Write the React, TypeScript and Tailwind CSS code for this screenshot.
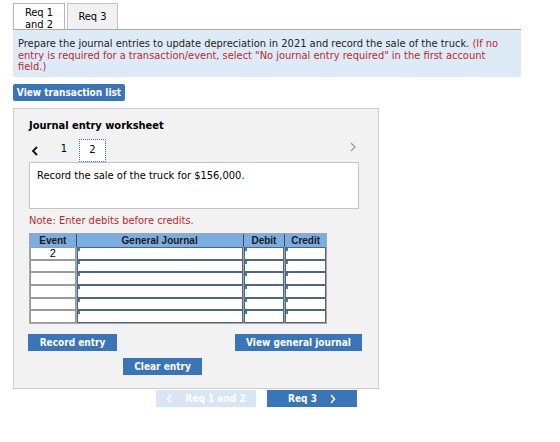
import React from "react";

const verdana = { fontFamily: '"DejaVu Sans Condensed", "DejaVu Sans", Verdana, sans-serif' };
const arial = { fontFamily: '"Liberation Sans", Arial, sans-serif' };

function Row({ event }: { event?: string }) {
  return (
    <div className="flex h-[12.7px] gap-[1px]">
      <div className="w-[46px] h-full bg-white border border-[#9a9a9a] flex items-center justify-center text-[11px] text-black" style={arial}>
        {event}
      </div>
      <div className="w-[167px] h-full border-[1.5px] border-[#4f6785] relative bg-white">
        <span className="absolute left-0 top-0 w-[2px] h-[3px] bg-[#3b7bd0]" />
      </div>
      <div className="w-[41px] h-full border-[1.5px] border-[#4f6785] relative bg-white">
        <span className="absolute left-0 top-0 w-[2px] h-[3px] bg-[#3b7bd0]" />
      </div>
      <div className="w-[41px] h-full border-[1.5px] border-[#4f6785] relative bg-white">
        <span className="absolute left-0 top-0 w-[2px] h-[3px] bg-[#3b7bd0]" />
      </div>
    </div>
  );
}

export default function App() {
  return (
    <div className="w-[560px] h-[442px] bg-white relative" style={verdana}>
      <div className="pl-[13px] pt-[3px]">
        {/* tabs */}
        <div className="flex gap-[2px] items-end h-[26px]">
          <div className="w-[52px] h-[26px] pt-[4px] bg-white border border-b-0 border-[#b5b5b5] flex flex-col items-center justify-center text-[11px] leading-[12px] text-black">
            <span>Req 1</span>
            <span>and 2</span>
          </div>
          <div className="w-[51px] h-[26px] pt-[2px] bg-[#f1f1f1] border border-b-0 border-[#c5c5c5] flex items-center justify-center text-[11px] text-black">
            Req 3
          </div>
        </div>
        {/* instructions */}
        <div className="w-[508px] h-[48px] bg-[#ddebf7] border-t border-[#a9a9a9] px-[5px] pt-[8px] text-[11px] leading-[11.5px] text-[#222]">
          Prepare the journal entries to update depreciation in 2021 and record the sale of the truck.{" "}
          <span className="text-[#c0272d]">
            (If no entry is required for a transaction/event, select "No journal entry required" in the first account field.)
          </span>
        </div>
        <div className="mt-[7px] w-[112px] h-[17px] bg-[#3b75b9] rounded-[2px] text-white font-bold text-[10px] flex items-center justify-center whitespace-nowrap">
          View transaction list
        </div>
        {/* worksheet */}
        <div className="mt-[7px] w-[366px] h-[281px] bg-[#f2f2f2] border border-[#cfcfcf] px-[15px] pt-[10px] relative">
          <div className="text-[11px] font-bold text-black leading-[14px]">Journal entry worksheet</div>
          <div className="mt-[6px] flex items-end h-[23px] relative">
            <span className="w-[20px] pl-[2px] pb-[6px] text-black">
              <svg width="8" height="10" viewBox="0 0 8 10">
                <path d="M6 1 L2 5 L6 9" stroke="#111" strokeWidth="1.8" fill="none" />
              </svg>
            </span>
            <span className="w-[30px] text-center text-[11px] pb-[5px] text-black">1</span>
            <span className="w-[27px] h-[23px] bg-white border border-dotted border-[#4477cc] flex items-center justify-center text-[11px] text-black">
              2
            </span>
            <span className="absolute right-[6px] top-[3px]">
              <svg width="8" height="10" viewBox="0 0 8 10">
                <path d="M2 1 L6 5 L2 9" stroke="#9a9a9a" strokeWidth="1.2" fill="none" />
              </svg>
            </span>
          </div>
          <div className="w-[330px] h-[47px] bg-white border border-[#c3c3c3] px-[7px] pt-[6px] text-[11px] text-black leading-[13px]">
            Record the sale of the truck for $156,000.
          </div>
          <div className="mt-[5px] text-[11px] text-[#c0272d] leading-[13px]">Note: Enter debits before credits.</div>
          {/* journal table */}
          <div className="mt-[6px] w-[298px] border border-[#a5a5a5] bg-[#a5a5a5]" style={arial}>
            <div className="flex h-[13px] gap-[1px] bg-[#3d4f66]">
              <div className="w-[46px] bg-[#7aaee3] text-[10px] font-bold text-[#1a1a1a] flex items-center justify-center">Event</div>
              <div className="w-[167px] bg-[#7aaee3] text-[10px] font-bold text-[#1a1a1a] flex items-center justify-center">General Journal</div>
              <div className="w-[41px] bg-[#7aaee3] text-[10px] font-bold text-[#1a1a1a] flex items-center justify-center">Debit</div>
              <div className="w-[41px] bg-[#7aaee3] text-[10px] font-bold text-[#1a1a1a] flex items-center justify-center">Credit</div>
            </div>
            <Row event="2" />
            <Row />
            <Row />
            <Row />
            <Row />
            <Row />
          </div>
          {/* actions */}
          <div className="mt-[10px] flex justify-between w-[334px] -ml-[1px]">
            <div className="w-[89px] h-[17px] bg-[#3b75b9] text-white font-bold text-[10px] flex items-center justify-center whitespace-nowrap">
              Record entry
            </div>
            <div className="w-[127px] h-[17px] bg-[#3b75b9] text-white font-bold text-[10px] flex items-center justify-center whitespace-nowrap">
              View general journal
            </div>
          </div>
          <div className="mt-[7px] ml-[94px] w-[79px] h-[17px] bg-[#3b75b9] text-white font-bold text-[10px] flex items-center justify-center whitespace-nowrap">
            Clear entry
          </div>
        </div>
        {/* requirement navigation */}
        <div className="flex gap-[11px] ml-[143px] mt-[1px]">
          <div className="w-[100px] h-[17px] bg-[#d7e5f4] text-white font-bold text-[10px] flex items-center justify-center gap-[12px] whitespace-nowrap">
            <svg width="7" height="10" viewBox="0 0 7 10">
              <path d="M5 1 L1.5 5 L5 9" stroke="#fff" strokeWidth="1.5" fill="none" />
            </svg>
            <span>Req 1 and 2</span>
          </div>
          <div className="w-[90px] h-[17px] bg-[#3b75b9] text-white font-bold text-[10px] flex items-center justify-center gap-[12px] whitespace-nowrap">
            <span>Req 3</span>
            <svg width="7" height="10" viewBox="0 0 7 10">
              <path d="M2 1 L5.5 5 L2 9" stroke="#fff" strokeWidth="1.5" fill="none" />
            </svg>
          </div>
        </div>
      </div>
    </div>
  );
}
